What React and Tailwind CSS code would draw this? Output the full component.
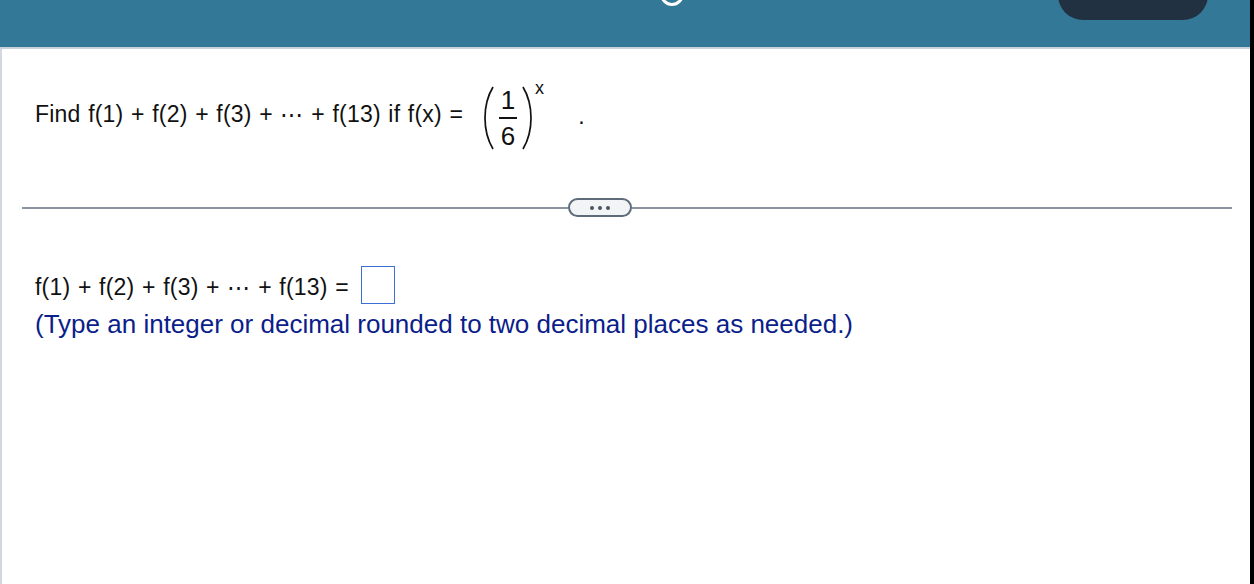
export default function App() {
  const font = { fontFamily: '"Liberation Sans", Arial, sans-serif' };

  return (
    <div className="h-[584px] w-[1254px] overflow-hidden bg-black" style={font}>
      <div className="flex h-full w-[1250px] flex-col bg-white">
        {/* Top bar */}
        <div className="relative h-[47px] shrink-0 bg-[#337896]">
          <div className="absolute left-[660px] top-[-18px] h-[24px] w-[24px] rounded-full border-[3px] border-white"></div>
          <div className="absolute left-[1058px] top-[-30px] h-[50px] w-[150px] rounded-[26px] bg-[#223142]"></div>
        </div>
        <div className="h-[2px] shrink-0 bg-[#c9d1dc]"></div>

        <div className="flex flex-1 border-l-2 border-[#d3d8e0]">
          <div className="flex-1 pl-[33px] pr-[20px]">
            {/* Question */}
            <div className="mt-[36px] flex h-[66px] items-center text-[23px] tracking-[0.2px] text-[#111]">
              <span className="pb-[8px] [word-spacing:1px]">Find f(1) + f(2) + f(3) + ⋯ + f(13) if f(x) =</span>
              <div className="ml-[19px] flex items-center">
                <svg width="14" height="66" viewBox="0 0 14 66">
                  <path d="M11 2 C5 12 3 22 3 33 C3 44 5 54 11 64" fill="none" stroke="#111" strokeWidth="1.7" />
                </svg>
                <div className="mx-[3px] flex flex-col items-center text-[26px]">
                  <span className="leading-[30px]">1</span>
                  <div className="my-[2px] h-[2px] w-[18px] bg-[#111]"></div>
                  <span className="leading-[30px]">6</span>
                </div>
                <svg width="14" height="66" viewBox="0 0 14 66">
                  <path d="M3 2 C9 12 11 22 11 33 C11 44 9 54 3 64" fill="none" stroke="#111" strokeWidth="1.7" />
                </svg>
              </div>
              <span className="ml-[1px] mt-[-6px] self-start text-[18px] leading-[18px]">x</span>
              <span className="ml-[34px] mt-[-4px]">.</span>
            </div>

            {/* Separator */}
            <div className="mt-[47px] -ml-[13px] mr-[-2px] flex items-center">
              <div className="h-[2px] flex-1 bg-[#8a94a0]"></div>
              <div className="flex h-[19px] w-[64px] items-center justify-center gap-[4px] rounded-full border-2 border-[#5d6b7a] bg-[#f3f4f6]">
                <span className="h-[4px] w-[4px] rounded-full bg-[#4b5563]"></span>
                <span className="h-[4px] w-[4px] rounded-full bg-[#4b5563]"></span>
                <span className="h-[4px] w-[4px] rounded-full bg-[#4b5563]"></span>
              </div>
              <div className="h-[2px] w-[600px] bg-[#8a94a0]"></div>
            </div>

            {/* Answer */}
            <div className="mt-[49px] flex h-[38px] items-center text-[23px] tracking-[0.2px] text-[#111]">
              <span className="pt-[5px] [word-spacing:1px]">f(1) + f(2) + f(3) + ⋯ + f(13) =</span>
              <div className="ml-[12px] h-[38px] w-[34px] border-[1.5px] border-[#3b6fd4]"></div>
            </div>
            <div className="mt-[5px] text-[26px] leading-[30px] text-[#0b1e8a]">
              (Type an integer or decimal rounded to two decimal places as needed.)
            </div>
          </div>
        </div>
      </div>
    </div>
  );
}
